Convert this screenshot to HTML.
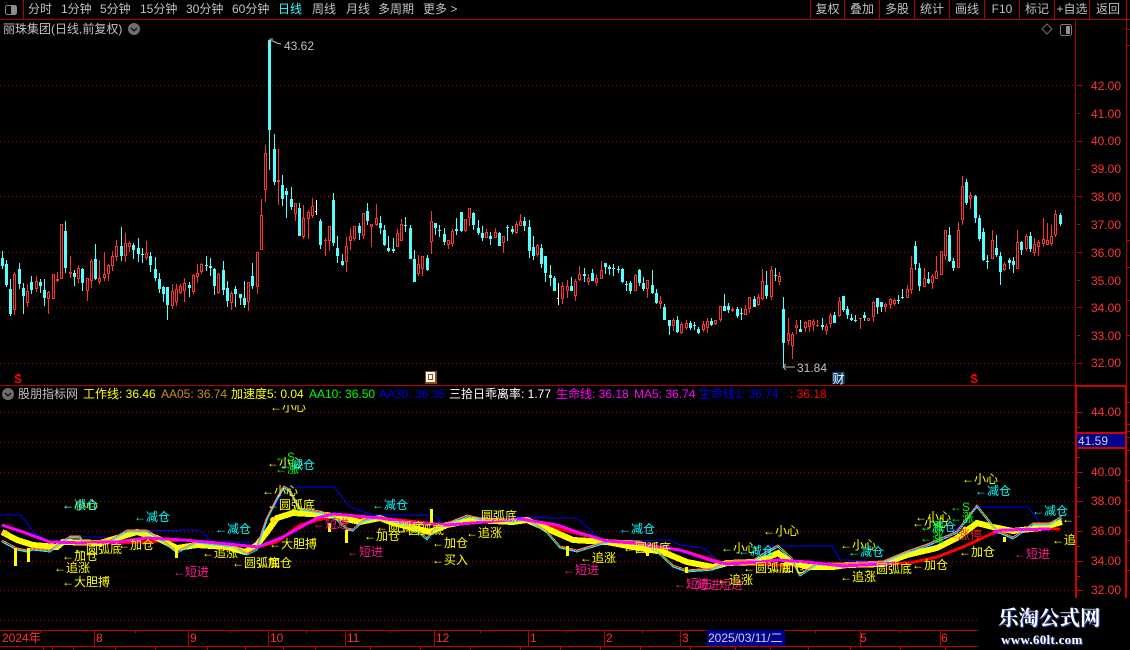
<!DOCTYPE html>
<html><head><meta charset="utf-8">
<style>
html,body{margin:0;padding:0;background:#000;width:1130px;height:650px;overflow:hidden}
body{position:relative;font:12px/14px "Liberation Sans","WenQuanYi Zen Hei","Noto Sans CJK SC",sans-serif;color:#c0c0c0}
span,i,b{position:absolute;font-style:normal;font-weight:normal;white-space:pre}
svg{position:absolute;left:0;top:0}
#t{position:absolute;left:0;top:0;width:1075px;height:630px;clip-path:inset(405px 0 0 0);font-family:"WenQuanYi Zen Hei","Liberation Sans",sans-serif}
.y{color:#ff0}.c{color:#0ff}.p{color:#ff1a8c}.g{color:#0f0}.r{color:#ff2020}
.a{color:#ff3232;left:1091px}
.m{color:#ff3232;top:631px}
.btn{top:2px;text-align:center}
</style></head><body>
<svg id="s" width="1130" height="650" shape-rendering="crispEdges">
<g stroke="#a00000" stroke-dasharray="1 3">
<path d="M0 85.5H1075M0 141.5H1075M0 196.5H1075M0 252.5H1075M0 307.5H1075M0 363.5H1075"/>
<path d="M0 412.5H1075M0 442.5H1075M0 472.5H1075M0 501.5H1075M0 531.5H1075M0 561.5H1075M0 590.5H1075M0 620.5H980"/>
</g>
<g id="k"></g>
<g fill="none">
<polyline stroke="#0000ff" points="0,515 20,515 25,520 33,532 50,542 60,540 70,537 117,537 127,531 197,530 203,533 210,540 213,542 257,542 262,535 268,515 288,487 334,487 342,497 350,507 370,514 385,515 433,515 443,523 447,523 467,517 530,517 553,518 577,518 587,527 597,537 610,541 670,540 680,545 703,548 720,562 760,562 767,546 778,546 832,546 840,560 910,562 913,550 943,543 963,523 977,507 1028,507 1040,523 1050,525 1061,520"/>
<polyline stroke="#ff0000" stroke-width="3" points="60,543 120,543 183,540 217,543 257,547 277,542 300,525 333,516 380,518 447,525 473,523 520,519 607,541 680,550 727,564 843,566 883,564 910,563 937,557 963,547 993,533 1040,528 1060,529"/>
<polyline stroke="#ffff00" stroke-width="6" points="2,532 17,540 33,545 57,547 63,542 100,543 117,538 137,532 157,538 177,548 197,545 227,547 245,552 257,545 267,532 277,518 293,513 327,515 360,522 380,518 393,523 430,532 447,525 473,520 513,522 527,520 550,530 573,540 607,542 633,547 663,552 687,562 713,567 727,563 753,562 767,558 778,553 790,562 808,567 833,567 847,565 883,564 907,555 937,548 957,538 977,523 993,527 1013,531 1040,528 1062,522"/>
<g transform="translate(0,-2)"><polyline stroke="#ff9000" points="2,542 17,550 27,552 33,550 50,552 60,545 70,538 80,538 83,543 110,542 127,532 147,532 160,540 177,553 197,543 233,547 247,555 257,550 267,520 277,500 284,488 290,492 300,510 320,513 333,517 347,530 353,531 363,522 370,520 380,518 413,528 427,540 435,530 447,525 467,517 480,520 513,522 527,520 547,533 560,548 577,552 593,547 610,542 640,543 657,552 673,567 687,572 713,570 727,563 753,562 767,553 778,547 792,560 800,576 817,565 843,565 883,563 907,553 930,545 957,533 977,507 997,532 1013,539 1033,525 1050,525 1062,518"/></g>
<polyline stroke="#ff60a0" points="2,542 17,550 27,552 33,550 50,552 60,545 70,538 80,538 83,543 110,542 127,532 147,532 160,540 177,553 197,543 233,547 247,555 257,550 267,520 277,500 284,488 290,492 300,510 320,513 333,517 347,530 353,531 363,522 370,520 380,518 413,528 427,540 435,530 447,525 467,517 480,520 513,522 527,520 547,533 560,548 577,552 593,547 610,542 640,543 657,552 673,567 687,572 713,570 727,563 753,562 767,553 778,547 792,560 800,576 817,565 843,565 883,563 907,553 930,545 957,533 977,507 997,532 1013,539 1033,525 1050,525 1062,518" transform="translate(-1,-1)"/>
<polyline stroke="#00ffff" points="2,542 17,550 27,552 33,550 50,552 60,545 70,538 80,538 83,543 110,542 127,532 147,532 160,540 177,553 197,543 233,547 247,555 257,550 267,520 277,500 284,488 290,492 300,510 320,513 333,517 347,530 353,531 363,522 370,520 380,518 413,528 427,540 435,530 447,525 467,517 480,520 513,522 527,520 547,533 560,548 577,552 593,547 610,542 640,543 657,552 673,567 687,572 713,570 727,563 753,562 767,553 778,547 792,560 800,576 817,565 843,565 883,563 907,553 930,545 957,533 977,507 997,532 1013,539 1033,525 1050,525 1062,518"/>
<polyline stroke="#ff00ff" stroke-width="3" points="2,525 23,532 50,542 83,543 117,542 147,538 183,540 217,543 258,547 283,537 317,518 333,514 380,518 413,523 447,525 473,523 520,519 557,525 580,533 607,541 633,543 680,550 713,561 727,564 760,562 777,560 807,562 843,566 883,564 895,563"/>
<polyline stroke="#ff00ff" stroke-width="3" points="993,532 1003,530 1050,529"/>
</g>
<g fill="#ffff00">
<rect x="14" y="548" width="3" height="18"/><rect x="27" y="548" width="3" height="14"/><rect x="175" y="548" width="3" height="10"/><rect x="328" y="523" width="3" height="9"/><rect x="345" y="530" width="3" height="13"/><rect x="430" y="509" width="3" height="14"/><rect x="566" y="546" width="3" height="10"/><rect x="646" y="548" width="3" height="8"/><rect x="685" y="567" width="3" height="6"/><rect x="1003" y="537" width="3" height="5"/>
</g>
<g shape-rendering="auto" fill="#ffe000"><circle cx="957" cy="538" r="2.5"/><circle cx="965" cy="529" r="2.5"/><circle cx="5" cy="533" r="3"/><circle cx="273" cy="520" r="3"/></g>
<!-- frame -->
<g fill="#b00000">
<rect x="0" y="19" width="1130" height="1"/><rect x="23" y="0" width="1" height="20"/>
<rect x="810" y="0" width="1" height="20"/><rect x="844" y="0" width="1" height="20"/><rect x="879" y="0" width="1" height="20"/><rect x="914" y="0" width="1" height="20"/><rect x="949" y="0" width="1" height="20"/><rect x="984" y="0" width="1" height="20"/><rect x="1019" y="0" width="1" height="20"/><rect x="1054" y="0" width="1" height="20"/><rect x="1089" y="0" width="1" height="20"/>
<rect x="1075" y="20" width="1" height="366"/>
<rect x="0" y="385" width="1075" height="1"/>
<rect x="1126" y="0" width="1" height="600"/>
<rect x="1077" y="85" width="6" height="1"/><rect x="1077" y="141" width="6" height="1"/><rect x="1077" y="196" width="6" height="1"/><rect x="1077" y="252" width="6" height="1"/><rect x="1077" y="307" width="6" height="1"/><rect x="1077" y="363" width="6" height="1"/>
<rect x="1077" y="113" width="3" height="1"/><rect x="1077" y="169" width="3" height="1"/><rect x="1077" y="224" width="3" height="1"/><rect x="1077" y="280" width="3" height="1"/><rect x="1077" y="335" width="3" height="1"/>
<rect x="1127" y="29" width="3" height="1"/><rect x="1127" y="45" width="3" height="1"/><rect x="1127" y="240" width="3" height="1"/><rect x="1127" y="267" width="3" height="1"/><rect x="1127" y="300" width="3" height="1"/><rect x="1127" y="335" width="3" height="1"/><rect x="1127" y="402" width="3" height="1"/><rect x="1127" y="424" width="3" height="1"/><rect x="1127" y="431" width="3" height="1"/><rect x="1127" y="437" width="3" height="1"/><rect x="1127" y="450" width="3" height="1"/><rect x="1127" y="480" width="3" height="1"/><rect x="1127" y="510" width="3" height="1"/><rect x="1127" y="540" width="3" height="1"/><rect x="1127" y="570" width="3" height="1"/>
</g>
<g fill="#d00000">
<rect x="1075" y="386" width="2" height="214"/>
<rect x="1075" y="385" width="52" height="2"/>
<rect x="1125" y="385" width="2" height="215"/>
<rect x="1077" y="412" width="6" height="1"/><rect x="1077" y="472" width="6" height="1"/><rect x="1077" y="501" width="6" height="1"/><rect x="1077" y="531" width="6" height="1"/><rect x="1077" y="561" width="6" height="1"/><rect x="1077" y="590" width="6" height="1"/>
<rect x="1077" y="427" width="3" height="1"/><rect x="1077" y="457" width="3" height="1"/><rect x="1077" y="487" width="3" height="1"/><rect x="1077" y="516" width="3" height="1"/><rect x="1077" y="546" width="3" height="1"/><rect x="1077" y="576" width="3" height="1"/>
<rect x="1075" y="432" width="52" height="17"/>
</g>
<rect x="1077" y="434" width="48" height="13" fill="#00008b"/>
<!-- time axis -->
<g fill="#c00000">
<rect x="0" y="630" width="978" height="1"/><rect x="0" y="646" width="978" height="1"/>
<rect x="94" y="630" width="1" height="16"/><rect x="188" y="630" width="1" height="16"/><rect x="268" y="630" width="1" height="16"/><rect x="345" y="630" width="1" height="16"/><rect x="434" y="630" width="1" height="16"/><rect x="528" y="630" width="1" height="16"/><rect x="604" y="630" width="1" height="16"/><rect x="680" y="630" width="1" height="16"/><rect x="860" y="630" width="1" height="16"/><rect x="940" y="630" width="1" height="16"/>
<rect x="43" y="646" width="1" height="4"/><rect x="52" y="646" width="1" height="4"/><rect x="73" y="646" width="1" height="4"/><rect x="115" y="646" width="1" height="4"/><rect x="155" y="646" width="1" height="4"/><rect x="207" y="646" width="1" height="4"/><rect x="245" y="646" width="1" height="4"/><rect x="283" y="646" width="1" height="4"/><rect x="315" y="646" width="1" height="4"/><rect x="370" y="646" width="1" height="4"/><rect x="420" y="646" width="1" height="4"/><rect x="470" y="646" width="1" height="4"/><rect x="520" y="646" width="1" height="4"/><rect x="560" y="646" width="1" height="4"/><rect x="600" y="646" width="1" height="4"/><rect x="640" y="646" width="1" height="4"/><rect x="690" y="646" width="1" height="4"/><rect x="735" y="646" width="1" height="4"/><rect x="770" y="646" width="1" height="4"/><rect x="808" y="646" width="1" height="4"/><rect x="850" y="646" width="1" height="4"/><rect x="900" y="646" width="1" height="4"/><rect x="945" y="646" width="1" height="4"/>
<rect x="40" y="630" width="1" height="3"/><rect x="135" y="630" width="1" height="3"/><rect x="230" y="630" width="1" height="3"/><rect x="306" y="630" width="1" height="3"/><rect x="390" y="630" width="1" height="3"/><rect x="480" y="630" width="1" height="3"/><rect x="566" y="630" width="1" height="3"/><rect x="642" y="630" width="1" height="3"/><rect x="815" y="630" width="1" height="3"/><rect x="900" y="630" width="1" height="3"/>
</g>
<rect x="707" y="630" width="78" height="16" fill="#00008b"/>
<rect x="978" y="598" width="152" height="52" fill="#000"/>
<!-- left toolbar icon -->
<g shape-rendering="auto">
<rect x="5.5" y="5.5" width="11" height="9" rx="2" fill="none" stroke="#8c8c8c"/><rect x="11" y="6" width="5" height="8" fill="#8c8c8c"/>
<rect x="1060.5" y="24.5" width="11" height="11" rx="2" fill="none" stroke="#808080"/><rect x="1066" y="26" width="4" height="8" fill="#909090"/>
<path d="M1047 24l5 5-5 5-5-5z" fill="none" stroke="#707070"/>
<circle cx="134" cy="29" r="6" fill="#6e6e6e"/><path d="M131 28l3 3 3-3" fill="none" stroke="#111" stroke-width="1.3"/>
<circle cx="8" cy="394" r="6" fill="#6e6e6e"/><path d="M5 393l3 3 3-3" fill="none" stroke="#111" stroke-width="1.3"/>
<path d="M270 43v-4h3M270 41l3 0l4 2l4 1" fill="none" stroke="#c0c0c0"/>
<path d="M795 367h-12M786 364l-3 3 3 3" fill="none" stroke="#b0b0b0"/>
</g>
<!-- markers -->
<rect x="425" y="371" width="12" height="13" fill="#8a4a14"/><rect x="426" y="372" width="9" height="10" fill="#fff"/><rect x="428" y="374" width="5" height="6" fill="#8a4a14"/><rect x="429" y="375" width="3" height="4" fill="#fff"/>
<rect x="832" y="372" width="13" height="12" fill="#0a3a6a"/>
<path d="M18 373l-3 3h6zM974 373l-3 3h6z" fill="#ff0000"/>
</svg>

<!-- toolbar -->
<span style="left:28px;top:2px">分时</span>
<span style="left:61px;top:2px">1分钟</span>
<span style="left:100px;top:2px">5分钟</span>
<span style="left:140px;top:2px">15分钟</span>
<span style="left:186px;top:2px">30分钟</span>
<span style="left:232px;top:2px">60分钟</span>
<span style="left:278px;top:2px;color:#33ffff">日线</span>
<span style="left:312px;top:2px">周线</span>
<span style="left:346px;top:2px">月线</span>
<span style="left:378px;top:2px">多周期</span>
<span style="left:423px;top:2px">更多 &gt;</span>
<span class="btn" style="left:811px;width:33px">复权</span>
<span class="btn" style="left:845px;width:34px">叠加</span>
<span class="btn" style="left:880px;width:34px">多股</span>
<span class="btn" style="left:915px;width:34px">统计</span>
<span class="btn" style="left:950px;width:34px">画线</span>
<span class="btn" style="left:985px;width:34px">F10</span>
<span class="btn" style="left:1020px;width:34px">标记</span>
<span class="btn" style="left:1055px;width:34px">+自选</span>
<span class="btn" style="left:1090px;width:36px">返回</span>

<span style="left:3px;top:22px">丽珠集团(日线,前复权)</span>
<span style="left:284px;top:39px">43.62</span>
<span style="left:797px;top:361px">31.84</span>
<span style="left:13px;top:373px;color:#f00;font-size:12px;line-height:12px;width:10px;text-align:center;font-weight:bold">S</span>
<span style="left:969px;top:373px;color:#f00;font-size:12px;line-height:12px;width:10px;text-align:center;font-weight:bold">S</span>
<span style="left:832px;top:372px;width:13px;text-align:center;color:#fff">财</span>

<!-- main axis -->
<span class="a" style="top:79px">42.00</span><span class="a" style="top:107px">41.00</span><span class="a" style="top:134px">40.00</span><span class="a" style="top:162px">39.00</span><span class="a" style="top:190px">38.00</span><span class="a" style="top:218px">37.00</span><span class="a" style="top:246px">36.00</span><span class="a" style="top:274px">35.00</span><span class="a" style="top:301px">34.00</span><span class="a" style="top:329px">33.00</span><span class="a" style="top:356px">32.00</span>

<!-- sub header -->
<span style="left:18px;top:387px">股朋指标网</span>
<span class="y" style="left:83px;top:387px">工作线: 36.46</span>
<span style="left:161px;top:387px;color:#c89010">AA05: 36.74</span>
<span class="y" style="left:231px;top:387px">加速度5: 0.04</span>
<span class="g" style="left:309px;top:387px">AA10: 36.50</span>
<span style="left:379px;top:387px;color:#0000e6">AA30: 36.35</span>
<span style="left:449px;top:387px;color:#fff">三拾日乖离率: 1.77</span>
<span style="left:556px;top:387px;color:#f0f">生命线: 36.18</span>
<span style="left:634px;top:387px;color:#f0f">MA5: 36.74</span>
<span style="left:699px;top:387px;color:#0000e6">生命线1: 36.74</span>
<span style="left:790px;top:387px;color:#f00">: 36.18</span>

<!-- sub axis -->
<span class="a" style="top:405px">44.00</span>
<span style="left:1078px;top:434px;color:#d0d0e8">41.59</span>
<span class="a" style="top:465px">40.00</span><span class="a" style="top:494px">38.00</span><span class="a" style="top:524px">36.00</span><span class="a" style="top:554px">34.00</span><span class="a" style="top:583px">32.00</span>

<!-- annotations -->
<div id="t">
<i class="y" style="left:270px;top:400px">←小心</i>
<i class="y" style="left:267px;top:456px">←小心</i>
<i class="g" style="left:275px;top:450px">←S</i>
<i class="g" style="left:275px;top:462px">←涨</i>
<i class="c" style="left:279px;top:458px">←减仓</i>
<i class="y" style="left:262px;top:484px">←小心</i>
<i class="y" style="left:267px;top:498px">←圆弧底</i>
<i class="y" style="left:62px;top:498px">←小心</i>
<i class="c" style="left:62px;top:498px">←减仓</i>
<i class="c" style="left:134px;top:510px">←减仓</i>
<i class="c" style="left:215px;top:522px">←减仓</i>
<i class="y" style="left:62px;top:549px">←加仓</i>
<i class="y" style="left:74px;top:542px">←圆弧底</i>
<i class="y" style="left:118px;top:538px">←加仓</i>
<i class="y" style="left:54px;top:561px">←追涨</i>
<i class="y" style="left:62px;top:575px">←大胆搏</i>
<i class="y" style="left:269px;top:537px">←大胆搏</i>
<i class="p" style="left:173px;top:565px">←短进</i>
<i class="y" style="left:202px;top:546px">←追涨</i>
<i class="y" style="left:232px;top:556px">←圆弧底</i>
<i class="y" style="left:256px;top:556px">←加仓</i>
<i class="p" style="left:313px;top:517px">←短进</i>
<i class="p" style="left:347px;top:545px">←短进</i>
<i class="y" style="left:364px;top:529px">←加仓</i>
<i class="c" style="left:372px;top:498px">←减仓</i>
<i class="y" style="left:376px;top:520px">←圆弧底</i>
<i class="y" style="left:396px;top:523px">←圆弧底</i>
<i class="y" style="left:432px;top:536px">←加仓</i>
<i class="y" style="left:432px;top:553px">←买入</i>
<i class="y" style="left:466px;top:526px">←追涨</i>
<i class="y" style="left:469px;top:509px">←圆弧底</i>
<i class="c" style="left:619px;top:522px">←减仓</i>
<i class="y" style="left:580px;top:551px">←追涨</i>
<i class="p" style="left:563px;top:563px">←短进</i>
<i class="y" style="left:623px;top:541px">←圆弧底</i>
<i class="y" style="left:721px;top:541px">←小心</i>
<i class="c" style="left:738px;top:544px">←减仓</i>
<i class="p" style="left:674px;top:577px">←短进</i>
<i class="p" style="left:684px;top:578px">←短进</i>
<i class="p" style="left:707px;top:578px">←短进</i>
<i class="y" style="left:717px;top:573px">←追涨</i>
<i class="y" style="left:743px;top:561px">←圆弧底</i>
<i class="y" style="left:770px;top:561px">←加仓</i>
<i class="y" style="left:763px;top:524px">←小心</i>
<i class="y" style="left:840px;top:538px">←小心</i>
<i class="c" style="left:848px;top:545px">←减仓</i>
<i class="y" style="left:840px;top:570px">←追涨</i>
<i class="y" style="left:864px;top:562px">←圆弧底</i>
<i class="y" style="left:912px;top:558px">←加仓</i>
<i class="y" style="left:959px;top:545px">←加仓</i>
<i class="p" style="left:1014px;top:547px">←短进</i>
<i class="y" style="left:915px;top:510px">←小心</i>
<i class="y" style="left:912px;top:516px">←小心</i>
<i class="c" style="left:920px;top:520px">←减仓</i>
<i class="g" style="left:920px;top:520px">←涨</i>
<i class="g" style="left:920px;top:531px">←涨</i>
<i class="g" style="left:950px;top:500px">←S</i>
<i class="g" style="left:950px;top:511px">←涨</i>
<i class="r" style="left:946px;top:528px">←涨停</i>
<i class="y" style="left:962px;top:472px">←小心</i>
<i class="c" style="left:975px;top:484px">←减仓</i>
<i class="c" style="left:1032px;top:504px">←减仓</i>
<i class="y" style="left:1062px;top:512px">←圆弧底</i>
<i class="y" style="left:1052px;top:533px">←追涨</i>
</div>

<!-- time labels -->
<span class="m" style="left:2px">2024年</span><span class="m" style="left:96px">8</span><span class="m" style="left:190px">9</span><span class="m" style="left:270px">10</span><span class="m" style="left:347px">11</span><span class="m" style="left:436px">12</span><span class="m" style="left:530px">1</span><span class="m" style="left:606px">2</span><span class="m" style="left:682px">3</span><span class="m" style="left:860px">5</span><span class="m" style="left:941px">6</span>
<span style="left:708px;top:631px;color:#d0d0f0">2025/03/11/二</span>

<!-- watermark -->
<b style="left:998px;top:607px;font:bold 20.5px/24px 'Liberation Serif','Noto Serif CJK SC',serif;color:#fff;text-shadow:1px 1px 1px #3050c0">乐淘公式网</b>
<b style="left:1001px;top:632px;font:bold 13px/16px 'Liberation Serif',serif;color:#fff;text-shadow:1px 1px 1px #3050c0;letter-spacing:.3px">www.60lt.com</b>

<script>
(function(){
var g=document.getElementById('k'),h='',C={c:'#55ffff',r:'#ff3232',w:'#ffffff'};
function R(x,y,w,H,f){return '<rect x="'+x+'" y="'+y+'" width="'+w+'" height="'+H+'" fill="'+f+'"/>';}
function G(ox,oy,s,str){str.split(';').forEach(function(e){
var p=e.trim().split(/\s+/);if(p.length<6)return;
var x=Math.floor(ox+p[0]/s),t=p[1],col=C[t];
var a=Math.round(oy+p[2]/s),b=Math.round(oy+p[3]/s),c=Math.round(oy+p[4]/s),d=Math.round(oy+p[5]/s);
if(c<=b)c=b+1;
h+=R(x,a,1,Math.max(d-a,1),col);
if(t=='c')h+=R(x-1,b,3,c-b,col);
else if(t=='w')h+=R(x-1,b,2,c-b,col);
else if(c-b<3)h+=R(x-1,b,3,c-b,col);
else{h+=R(x-1,b,3,c-b,col)+R(x,b+1,1,c-b-2,'#000');}
});}
G(0,180,3,"7 c 213 235 258 267;19 c 240 252 316 321;31 c 297 327 402 407;43 r 277 282 389 405;58 c 249 267 312 326;70 c 310 324 348 402;82 r 312 333 369 380;94 c 288 306 330 342;109 r 288 304 327 336;121 c 297 306 318 339;133 c 297 330 354 378;145 r 333 336 357 402;160 r 282 282 357 357;172 r 276 297 303 306;184 r 132 132 296 296;196 c 123 153 264 279;211 r 228 276 282 294;223 c 270 279 291 318;235 r 255 264 297 309;247 c 264 267 309 333;262 r 294 294 333 363;274 r 237 243 303 324;286 c 193 237 297 300;298 r 240 294 306 312;313 r 216 282 294 303;325 r 252 255 282 303;337 r 213 228 258 273;349 r 180 198 231 243;364 c 141 198 228 243;376 r 159 190 228 246;388 r 183 189 201 216;400 c 189 195 210 237;415 c 174 204 222 246;427 c 204 222 224 249;439 r 183 219 234 240;451 c 216 228 255 276;466 c 231 267 294 303;478 c 279 297 327 339;490 c 318 321 342 366;502 c 321 321 375 420;517 r 312 333 378 387;529 r 312 327 366 378;541 r 312 318 339 342;553 r 294 309 333 366;568 c 306 315 324 351;580 r 282 285 336 342;592 r 252 279 291 309;604 r 249 252 276 282;619 c 228 255 258 273;631 c 234 258 264 288;643 c 264 267 318 345;655 r 279 282 339 342;670 c 243 270 330 345;682 c 303 324 363 381;694 r 333 339 369 390;706 c 318 327 342 381;721 c 342 342 354 375;733 c 303 354 375 384;745 r 306 306 366 393;757 c 249 288 318 327;772 r 216 216 321 342;784 r 57 105 210 210;886 r 69 69 102 123;898 c 69 84 168 168;910 r 75 114 171 177;925 r 90 96 117 177;937 r 54 78 108 114;949 w 60 93 96 105;961 c 117 123 195 207;976 r 174 180 183 228;988 r 138 138 183 214;1000 c 39 60 189 198;1012 c 168 204 228 249;1027 c 222 243 255 258;1039 r 171 198 246 276;1051 r 144 168 183 210;1063 r 138 138 178 183;1078 c 129 138 159 180;1090 r 99 99 168 177;1102 c 69 93 123 135;1114 r 132 132 141 201;1129 r 72 114 135 138");
G(0,0,1,"265 r 145 153 190 202;269 c 40 40 130 170;274 c 134 149 182 185;278 r 149 180 182 205;282 c 175 185 199 206;286 c 188 191 195 218;291 c 187 199 207 210");
G(380,190,3,"1 c 78 99 114 132;13 c 105 120 165 168;25 c 138 174 183 186;40 c 144 177 183 189;52 r 117 129 171 171;64 r 87 102 153 153;76 c 81 105 107 126;91 c 105 114 207 207;103 c 180 207 276 276;115 r 195 222 252 258;127 r 198 198 237 258;142 c 195 204 240 243;154 r 63 93 156 192;166 c 99 99 114 135;178 c 105 120 123 141;193 c 114 132 156 165;205 r 150 150 165 177;217 r 117 123 162 171;229 c 84 117 123 135;244 c 66 66 123 126;256 r 87 87 123 126;268 r 54 54 84 108;280 c 66 69 105 120;295 c 90 114 129 135;307 c 108 129 144 153;319 r 117 126 144 144;331 c 126 138 147 165;346 r 114 126 144 144;358 c 126 129 168 168;370 r 138 138 159 189;382 c 105 111 114 153;397 c 108 117 126 132;409 r 93 102 129 132;421 r 72 93 108 108;433 c 81 93 108 123;448 c 90 111 183 204;460 c 138 171 198 210;472 r 162 165 195 201;484 c 162 174 222 234;496 c 198 198 249 276;511 c 225 255 264 288;523 c 258 264 303 303;535 w 279 324 327 345;547 r 276 288 327 342;562 r 270 288 303 324;574 c 261 288 303 303;586 r 267 273 318 333;598 r 228 252 270 273;613 c 234 252 258 276;625 r 252 264 276 285;637 c 237 249 273 273;649 r 252 264 279 288;664 r 213 240 267 267;676 c 219 219 231 252;688 c 225 231 237 255;700 c 222 234 237 258;715 c 228 237 240 249;727 c 234 237 276 279;739 c 273 282 285 303;751 c 273 279 303 312;766 r 252 255 303 303;778 c 237 240 279 288;790 c 261 279 297 303;802 r 270 270 297 324;817 c 240 285 309 312;829 c 297 309 339 342;841 r 318 333 342 357;853 c 342 351 390 390;868 c 390 390 408 435;880 r 384 390 408 423;892 c 378 390 426 429;904 r 396 402 429 432;919 r 390 399 414 420;931 c 393 399 414 420;943 c 396 405 407 420;955 c 411 417 429 432;970 r 393 402 420 426;982 r 384 393 414 429;994 c 384 393 405 408;1006 r 390 390 402 405;1021 r 348 348 390 396;1033 c 312 348 363 363;1045 c 339 348 360 369;1057 r 351 357 363 366;1072 c 351 357 378 384;1084 c 354 369 371 390;1096 r 345 357 375 375;1108 r 321 321 357 369;1123 c 318 327 351 351;1135 r 312 321 345 348");
G(750,170,3,"37 r 297 333 387 390;49 c 303 345 378 387;64 r 288 300 381 390;76 c 294 315 317 333;88 r 306 318 336 345;100 c 381 417 519 590;115 r 444 489 513 525;127 r 486 492 528 567;139 r 450 465 474 492;151 c 450 477 486 486;166 r 453 456 474 486;178 r 450 450 471 486;190 r 447 453 465 483;202 r 450 465 468 471;217 c 444 465 471 480;229 r 462 468 483 495;241 r 429 435 462 474;253 c 426 435 459 459;268 r 381 393 438 441;280 c 378 378 420 426;292 c 408 417 435 447;304 c 432 444 450 453;316 c 435 450 452 456;331 r 444 444 447 477;343 c 426 435 444 453;355 r 444 444 453 453;370 r 393 396 441 456;382 c 387 384 411 432;394 c 396 396 411 426;406 r 399 402 411 426;421 r 384 387 405 417;433 r 384 390 402 408;445 c 375 390 392 402;457 c 357 381 384 387;472 r 345 357 384 384;484 r 258 294 360 372;496 c 213 228 282 300;508 c 279 294 348 363;523 r 294 324 351 351;535 c 306 327 339 342;547 r 312 318 339 357;559 r 258 303 327 327;574 r 243 243 315 315;586 r 180 180 258 270;598 c 171 195 273 276;610 c 264 273 294 303;625 r 156 180 294 294;637 r 18 48 150 165;649 c 27 36 99 105;661 r 66 75 87 117;676 c 75 78 144 159;688 c 135 144 207 213;700 c 174 186 270 273;712 c 255 273 274 297;727 r 180 210 267 267;739 c 195 234 255 261;751 c 246 258 306 345;763 r 276 282 300 303;778 c 264 270 279 297;790 c 261 273 285 309;802 r 180 216 297 297;814 c 213 216 240 255;829 r 192 198 237 243;841 c 186 198 237 246;853 r 204 222 249 258;865 r 210 216 231 258;880 r 144 207 222 231;892 r 159 210 225 225;904 r 165 198 222 228;916 r 120 132 195 201;931 c 129 135 162 168");
g.innerHTML=h;
})();
</script>
</body></html>
